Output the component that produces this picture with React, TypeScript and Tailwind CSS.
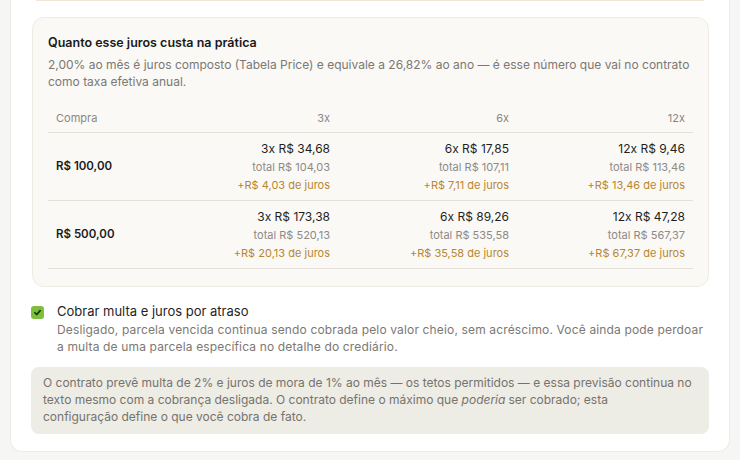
import React from 'react';

type Cell = { parcela: string; total: string; juros: string };
type Row = { compra: string; cells: Cell[] };

const rows: Row[] = [
  {
    compra: 'R$ 100,00',
    cells: [
      { parcela: '3x R$ 34,68', total: 'total R$ 104,03', juros: '+R$ 4,03 de juros' },
      { parcela: '6x R$ 17,85', total: 'total R$ 107,11', juros: '+R$ 7,11 de juros' },
      { parcela: '12x R$ 9,46', total: 'total R$ 113,46', juros: '+R$ 13,46 de juros' },
    ],
  },
  {
    compra: 'R$ 500,00',
    cells: [
      { parcela: '3x R$ 173,38', total: 'total R$ 520,13', juros: '+R$ 20,13 de juros' },
      { parcela: '6x R$ 89,26', total: 'total R$ 535,58', juros: '+R$ 35,58 de juros' },
      { parcela: '12x R$ 47,28', total: 'total R$ 567,37', juros: '+R$ 67,37 de juros' },
    ],
  },
];

export default function App() {
  return (
    <div className="min-h-screen overflow-hidden bg-[#f6f6f4] font-['Inter',sans-serif] text-[#1f1f1f]">
      <div className="mx-[10px] -mt-[40px] rounded-b-xl border border-t-0 border-[#ebebe7] bg-white px-[20px] pb-[17px]">
        {/* previous block, only its bottom edge is visible */}
        <div className="mx-[5px] h-[41px] border-b border-[#f1e7d6]" />

        {/* juros explanation */}
        <div className="ml-px mt-[16px] rounded-xl border border-[#efebe2] bg-[#faf9f6] px-[15px] pb-[17px] pt-[15px]">
          <h3 className="text-[12.5px] font-semibold leading-5 text-[#1a1a1a]">
            Quanto esse juros custa na prática
          </h3>
          <p className="mt-[3px] text-[12px] leading-[17px] text-[#7b7874]">
            2,00% ao mês é juros composto (Tabela Price) e equivale a 26,82% ao ano — é esse número que vai no contrato
            como taxa efetiva anual.
          </p>

          <table className="mt-[14px] w-full border-collapse">
            <thead>
              <tr className="border-b border-[#e4e1da]">
                <th className="w-[110px] px-2 py-[6px] text-left text-[11px] font-normal leading-4 text-[#8a8783]">
                  Compra
                </th>
                <th className="px-2 py-[6px] text-right text-[11px] font-normal leading-4 text-[#8a8783]">3x</th>
                <th className="w-[179px] px-2 py-[6px] text-right text-[11px] font-normal leading-4 text-[#8a8783]">6x</th>
                <th className="w-[176px] px-2 py-[6px] text-right text-[11px] font-normal leading-4 text-[#8a8783]">12x</th>
              </tr>
            </thead>
            <tbody>
              {rows.map((row) => (
                <tr key={row.compra} className="border-b border-[#e4e1da]">
                  <td className="px-2 text-[11.5px] font-semibold text-[#1a1a1a]">{row.compra}</td>
                  {row.cells.map((c) => (
                    <td key={c.parcela} className="px-2 pb-[6px] pt-[7px] text-right">
                      <div className="text-[12px] leading-[18px] text-[#1f1f1f]">{c.parcela}</div>
                      <div className="text-[11px] leading-[18px] text-[#8d8a86]">{c.total}</div>
                      <div className="text-[11px] leading-[18px] text-[#b8862e]">{c.juros}</div>
                    </td>
                  ))}
                </tr>
              ))}
            </tbody>
          </table>
        </div>

        {/* multa toggle */}
        <label className="mt-[15px] flex items-start gap-[13px]">
          <span className="mt-[4px] flex h-[13px] w-[13px] shrink-0 items-center justify-center rounded-[3px] bg-[#7cbf3c]">
            <svg viewBox="0 0 12 12" className="h-[9px] w-[9px]" fill="none" stroke="#1c2a10" strokeWidth="2.2" strokeLinecap="round" strokeLinejoin="round">
              <path d="M2.5 6.3 5 8.7 9.5 3.5" />
            </svg>
          </span>
          <span className="flex flex-col">
            <span className="text-[13px] leading-[19px] text-[#1f1f1f]">Cobrar multa e juros por atraso</span>
            <span className="text-[12px] leading-[17px] tracking-[0.15px] text-[#7b7874]">
              Desligado, parcela vencida continua sendo cobrada pelo valor cheio, sem acréscimo. Você ainda pode perdoar
              a multa de uma parcela específica no detalhe do crediário.
            </span>
          </span>
        </label>

        <div className="mt-[12px] rounded-lg bg-[#edece5] pb-[9px] pl-[12px] pr-[14px] pt-[7px] text-[12px] leading-[17px] text-[#76736e]">
          O contrato prevê multa de 2% e juros de mora de 1% ao mês — os tetos permitidos — e essa previsão continua no
          texto mesmo com a cobrança desligada. O contrato define o máximo que <em className="pr-[3px]">poderia</em>ser
          cobrado; esta
          <br />
          configuração define o que você cobra de fato.
        </div>
      </div>
    </div>
  );
}
